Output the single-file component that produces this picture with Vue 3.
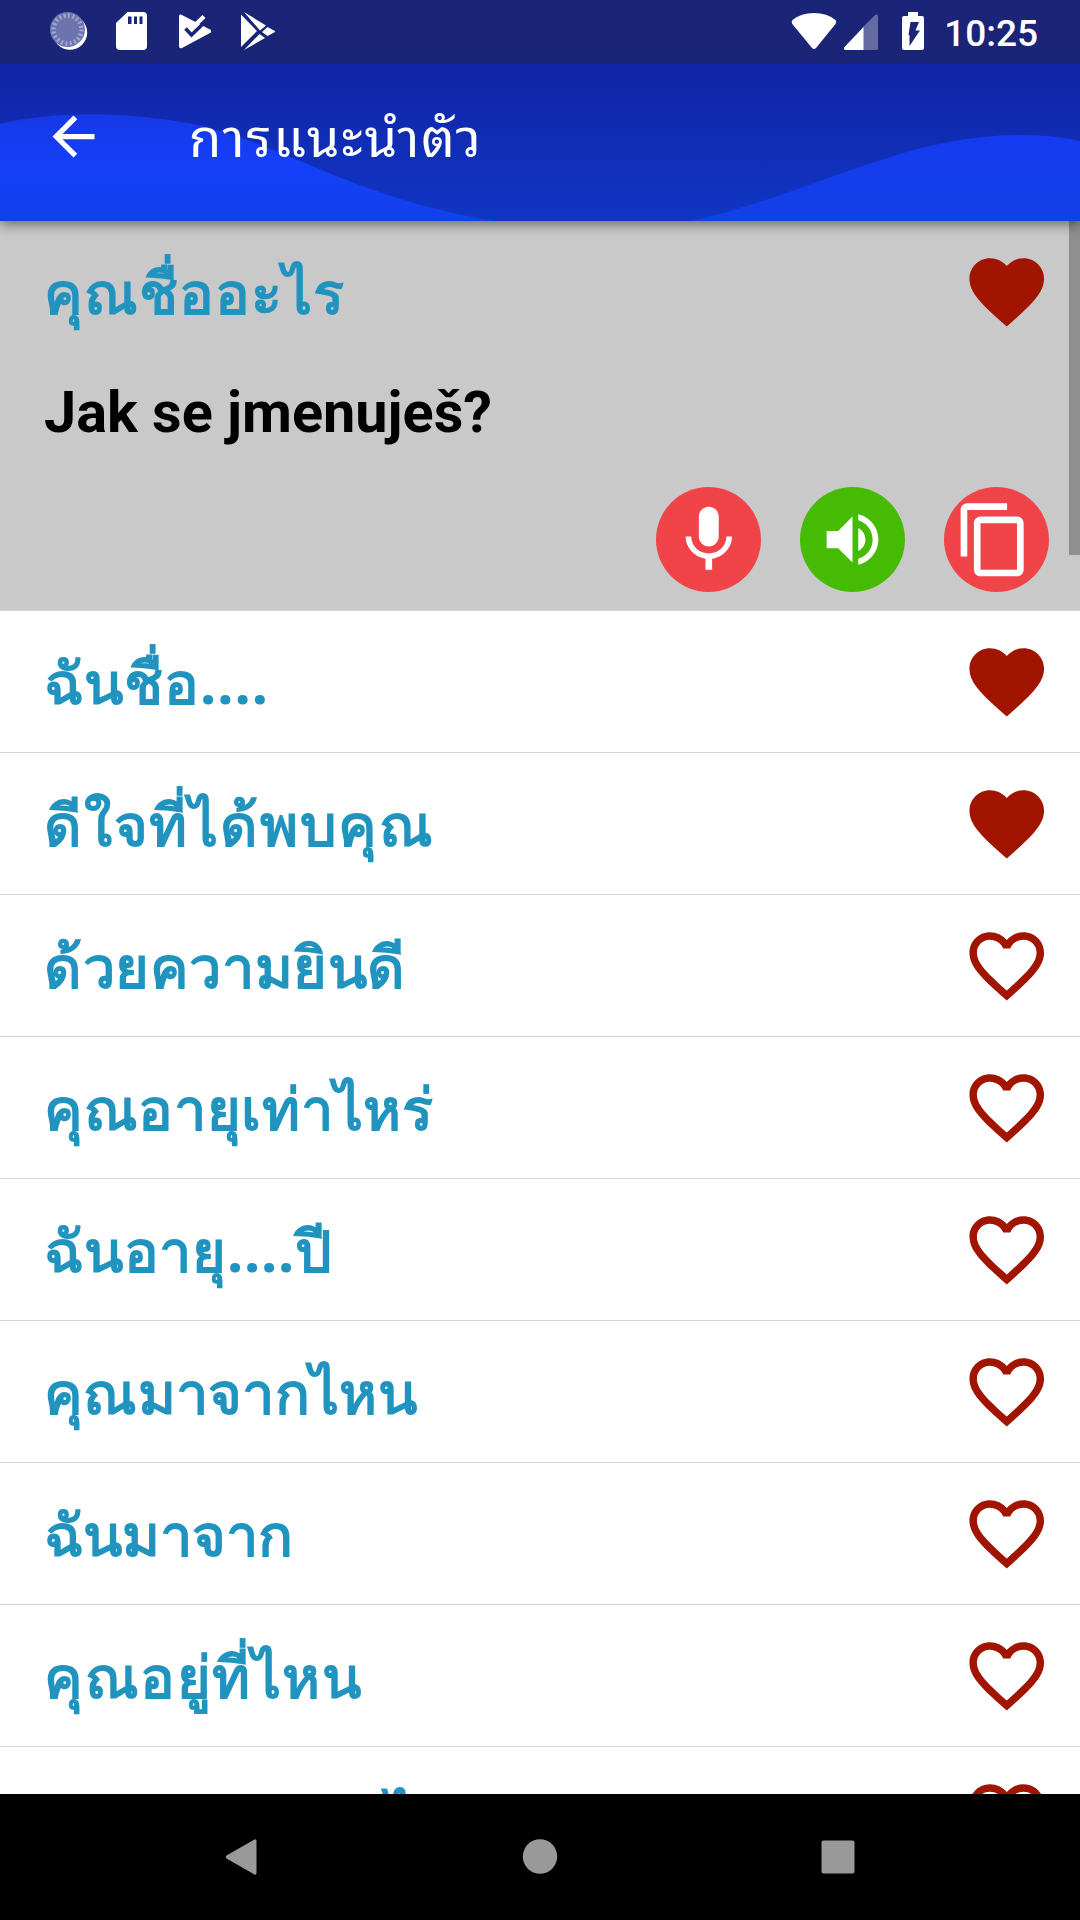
<template>
  <main class="phone">
    <header class="top">
      <svg class="waves" viewBox="0 0 1080 221">
        <defs>
          <linearGradient id="sky" x1="0" y1="0" x2="0" y2="1">
            <stop offset="0.28" stop-color="#1024a6" />
            <stop offset="1" stop-color="#1036c4" />
          </linearGradient>
          <linearGradient id="wave" x1="0" y1="0" x2="0" y2="1">
            <stop offset="0" stop-color="#1738e6" />
            <stop offset="0.5" stop-color="#1540fa" />
            <stop offset="1" stop-color="#1140ea" />
          </linearGradient>
          <linearGradient id="waveRight" x1="0" y1="0" x2="0" y2="1">
            <stop offset="0" stop-color="#163af0" />
            <stop offset="1" stop-color="#1240e6" />
          </linearGradient>
        </defs>
        <rect width="1080" height="221" fill="url(#sky)" />
        <path fill="url(#wave)" d="M0 124C60 110 130 112 198 125C240 135 265 147 303 162C360 187 420 209 495 221H0Z" />
        <path fill="url(#waveRight)" d="M690 221C760 206 820 179 884 159C950 137 1020 128 1080 141V221Z" />
        <rect width="1080" height="63" fill="#1b2577" />
      </svg>

      <div class="status">
        <svg class="status-left" viewBox="0 0 240 40">
          <circle cx="20" cy="22.500" r="17.200" fill="#fff" />
          <circle cx="17.500" cy="19.500" r="17.500" fill="#6d73ad" />
          <circle cx="17.500" cy="19.500" r="14" fill="none" stroke="#a2a6cb" stroke-width="4.500" stroke-dasharray="2 2.400" />
          <path fill="#fff" fill-rule="evenodd" d="M77.500 2H93Q97 2 97 6V36Q97 40 93 40H70Q66 40 66 36V13ZM78 6.500V14H81.500V6.500ZM84 6.500V14H87V6.500ZM89.500 6.500V14H92.500V6.500Z" />
          <path fill="#fff" d="M131 4.500L160 19.500Q162.500 21.500 160 23L132 38Q129 39 129 36V6Q129 4 131 4.500Z" />
          <path d="M135.500 18.500L141.500 25L157 10" fill="none" stroke="#1b2577" stroke-width="3.600" />
          <path d="M140 20L154 6.500" fill="none" stroke="#fff" stroke-width="4.400" />
          <path fill="#fff" d="M191 4.500L207 21L191 37ZM194 2L216 15.500L210 20.500ZM212 22L217.500 17L224 20.500Q226 21.500 224 22.500L217.500 26ZM209.500 24L215 28L194 40Z" />
        </svg>
        <svg class="status-right" viewBox="0 0 134 40">
          <path fill="#fff" d="M24 39Q23 39 22 38L2.300 14Q1 12 2.500 10Q11 3 24 3Q37 3 45.500 10Q47 12 45.500 14L26 38Q25 39 24 39Z" />
          <path fill="#636aa4" d="M72 18L85 5Q88 3.500 88 6.500V38.500Q88 40 86.500 40H72Z" />
          <path fill="#fff" d="M73.500 17V40H55Q53 39 54.500 37Z" />
          <path fill="#fff" d="M118 2H128V6H132Q134 6 134 8V38Q134 40 132 40H114Q112 40 112 38V8Q112 6 114 6H118Z" />
          <path fill="#1b2577" d="M120.500 12H129L125.500 20.500H130L119.500 36V25H118.500Z" />
        </svg>
        <span class="time">10:25</span>
      </div>

      <div class="toolbar">
        <svg class="back" viewBox="0 0 24 24"><path fill="#fff" d="M20 11H7.830l5.590-5.590L12 4l-8 8 8 8 1.410-1.410L7.830 13H20v-2z" /></svg>
        <h1>การแนะนำตัว</h1>
      </div>
    </header>

    <section class="list">
      <div v-for="(phrase, index) in phrases" :key="index" :class="`item ${index == opened ? 'open' : ''}`">
        <div class="line" @click="opened = index">
          <span class="thai" :style="{ letterSpacing: phrase.spacing + 'px' }">{{ phrase.thai }}</span>
          <svg class="heart" viewBox="0 0 24 24" @click.stop="phrase.liked = !phrase.liked">
            <path :d="phrase.liked ? heartFull : heartEmpty" />
          </svg>
        </div>
        <template v-if="index == opened">
          <p class="czech">{{ phrase.czech }}</p>
          <div class="actions">
            <button class="round red">
              <svg viewBox="0 0 24 24"><path d="M12 14c1.660 0 2.990-1.340 2.990-3L15 5c0-1.660-1.340-3-3-3S9 3.340 9 5v6c0 1.660 1.340 3 3 3zm5.300-3c0 3-2.540 5.100-5.300 5.100S6.700 14 6.700 11H5c0 3.410 2.720 6.230 6 6.720V21h2v-3.280c3.280-.48 6-3.300 6-6.720h-1.700z" /></svg>
            </button>
            <button class="round green">
              <svg class="small" viewBox="0 0 24 24"><path d="M3 9v6h4l5 5V4L7 9H3zm13.500 3c0-1.770-1.020-3.290-2.500-4.030v8.050c1.480-.73 2.500-2.250 2.500-4.020zM14 3.230v2.060c2.890.86 5 3.540 5 6.710s-2.110 5.850-5 6.710v2.060c4.010-.91 7-4.490 7-8.770s-2.990-7.860-7-8.770z" /></svg>
            </button>
            <button class="round red">
              <svg class="copy" viewBox="0 0 24 24"><path d="M16 1H4c-1.100 0-2 .9-2 2v14h2V3h12V1zm3 4H8c-1.100 0-2 .9-2 2v14c0 1.100.9 2 2 2h11c1.100 0 2-.9 2-2V7c0-1.100-.9-2-2-2zm0 16H8V7h11v14z" /></svg>
            </button>
          </div>
        </template>
      </div>
      <div class="scrollbar"></div>
    </section>

    <nav class="nav">
      <svg viewBox="0 0 36 36"><path d="M31.500 .5Q33.500 -.3 33.500 2V34Q33.500 36.300 31.500 35.500L3.500 19.500Q2 18 3.500 16.500Z" /></svg>
      <svg viewBox="0 0 36 36"><circle cx="18" cy="17.500" r="17.200" /></svg>
      <svg viewBox="0 0 36 36"><rect x="1.500" y="1.500" width="33" height="33" rx="2" /></svg>
    </nav>
  </main>
</template>

<script setup>
import { ref } from 'vue'

const heartFull = 'M12 21.350l-1.450-1.320C5.400 15.360 2 12.280 2 8.500 2 5.420 4.420 3 7.500 3c1.740 0 3.410.81 4.500 2.090C13.090 3.810 14.760 3 16.500 3 19.580 3 22 5.420 22 8.500c0 3.780-3.400 6.860-8.550 11.540L12 21.350z'
const heartEmpty = 'M16.500 3c-1.740 0-3.410.81-4.500 2.090C10.910 3.810 9.240 3 7.500 3 4.420 3 2 5.420 2 8.500c0 3.780 3.400 6.860 8.550 11.540L12 21.350l1.450-1.320C18.600 15.360 22 12.280 22 8.500 22 5.420 19.580 3 16.500 3zm-4.400 15.550l-.1.1-.1-.1C7.140 14.240 4 11.390 4 8.500 4 6.500 5.500 5 7.500 5c1.540 0 3.040.99 3.570 2.360h1.870C13.460 5.990 14.960 5 16.500 5c2 0 3.500 1.500 3.500 3.500 0 2.890-3.140 5.740-7.900 10.050z'

const opened = ref(0)

const phrases = ref([
  { thai: 'คุณชื่ออะไร', czech: 'Jak se jmenuješ?', liked: true, spacing: 1 },
  { thai: 'ฉันชื่อ....', liked: true, spacing: 1 },
  { thai: 'ดีใจที่ได้พบคุณ', liked: true, spacing: 1.8 },
  { thai: 'ด้วยความยินดี', liked: false, spacing: 0.6 },
  { thai: 'คุณอายุเท่าไหร่', liked: false, spacing: 0.7 },
  { thai: 'ฉันอายุ....ปี', liked: false, spacing: 0.8 },
  { thai: 'คุณมาจากไหน', liked: false, spacing: 0.3 },
  { thai: 'ฉันมาจาก', liked: false, spacing: 0 },
  { thai: 'คุณอยู่ที่ไหน', liked: false, spacing: 1.5 },
  { thai: 'คุณจะทานอะไร', liked: false, spacing: 1 }
])
</script>

<style>
body {
  background-color: #fff;
}
</style>

<style scoped>
* {
  margin: 0;
  padding: 0;
  box-sizing: border-box;
}
.phone {
  display: flex;
  flex-direction: column;
  width: 1080px;
  height: 1920px;
  overflow: hidden;
  font-family: Roboto, 'Noto Sans', sans-serif;
}
.top {
  position: relative;
  z-index: 1;
  flex: none;
  height: 221px;
  box-shadow: 0 3px 12px rgba(0, 0, 0, 0.5);
}
.waves {
  position: absolute;
  inset: 0;
  width: 1080px;
  height: 221px;
}
.status {
  position: relative;
  display: flex;
  height: 63px;
  padding: 10px 42px 0 50px;
}
.status-left {
  width: 240px;
  height: 40px;
}
.status-right {
  width: 134px;
  height: 40px;
  margin-left: auto;
  margin-right: 20px;
}
.time {
  width: 94px;
  color: #fff;
  font-size: 37px;
  font-weight: 500;
  line-height: 47px;
  text-align: right;
}
.toolbar {
  position: relative;
  display: flex;
  align-items: center;
  height: 147px;
  padding-left: 42px;
}
.back {
  width: 63px;
  height: 63px;
}
h1 {
  margin-left: 84px;
  color: #fff;
  font-family: 'Noto Sans', 'Noto Sans Thai Looped', sans-serif;
  font-size: 52.5px;
  font-weight: 400;
  line-height: 80px;
  letter-spacing: 1.9px;
}
.list {
  position: relative;
  flex: 1;
  min-height: 0;
  overflow: hidden;
  background-color: #fff;
}
.item {
  height: 142px;
  border-bottom: 1px solid #d6d6d6;
}
.item.open {
  height: 390px;
  background-color: #c9c9c9;
}
.line {
  display: flex;
  align-items: center;
  justify-content: space-between;
  height: 141px;
  padding: 0 29px 0 44px;
}
.thai {
  color: #2094bf;
  font-family: 'Noto Sans', Garuda, sans-serif;
  font-size: 57.75px;
  font-weight: 700;
  line-height: 80px;
  white-space: nowrap;
}
.heart {
  width: 89.5px;
  height: 89.5px;
  fill: #a01400;
}
.czech {
  height: 125px;
  padding-left: 44px;
  color: #000;
  font-size: 57.6px;
  font-weight: 700;
  line-height: 101px;
}
.actions {
  display: flex;
  justify-content: flex-end;
  gap: 39px;
  padding-right: 31px;
}
.round {
  display: flex;
  align-items: center;
  justify-content: center;
  width: 105px;
  height: 105px;
  border: none;
  border-radius: 50%;
}
.round.red {
  background-color: #f04448;
}
.round.green {
  background-color: #46bb04;
}
.round svg {
  width: 79.6px;
  height: 79.6px;
  fill: #fff;
}
.round .small {
  width: 69px;
  height: 69px;
}
.round .copy {
  margin-right: 5px;
}
.scrollbar {
  position: absolute;
  top: 0;
  right: 0;
  width: 11px;
  height: 334px;
  background-color: #8f8f8f;
}
.nav {
  display: flex;
  flex: none;
  align-items: center;
  justify-content: center;
  gap: 262.6px;
  height: 126px;
  padding-right: 1px;
  background-color: #000;
}
.nav svg {
  width: 36px;
  height: 36px;
  fill: #999;
}
</style>
